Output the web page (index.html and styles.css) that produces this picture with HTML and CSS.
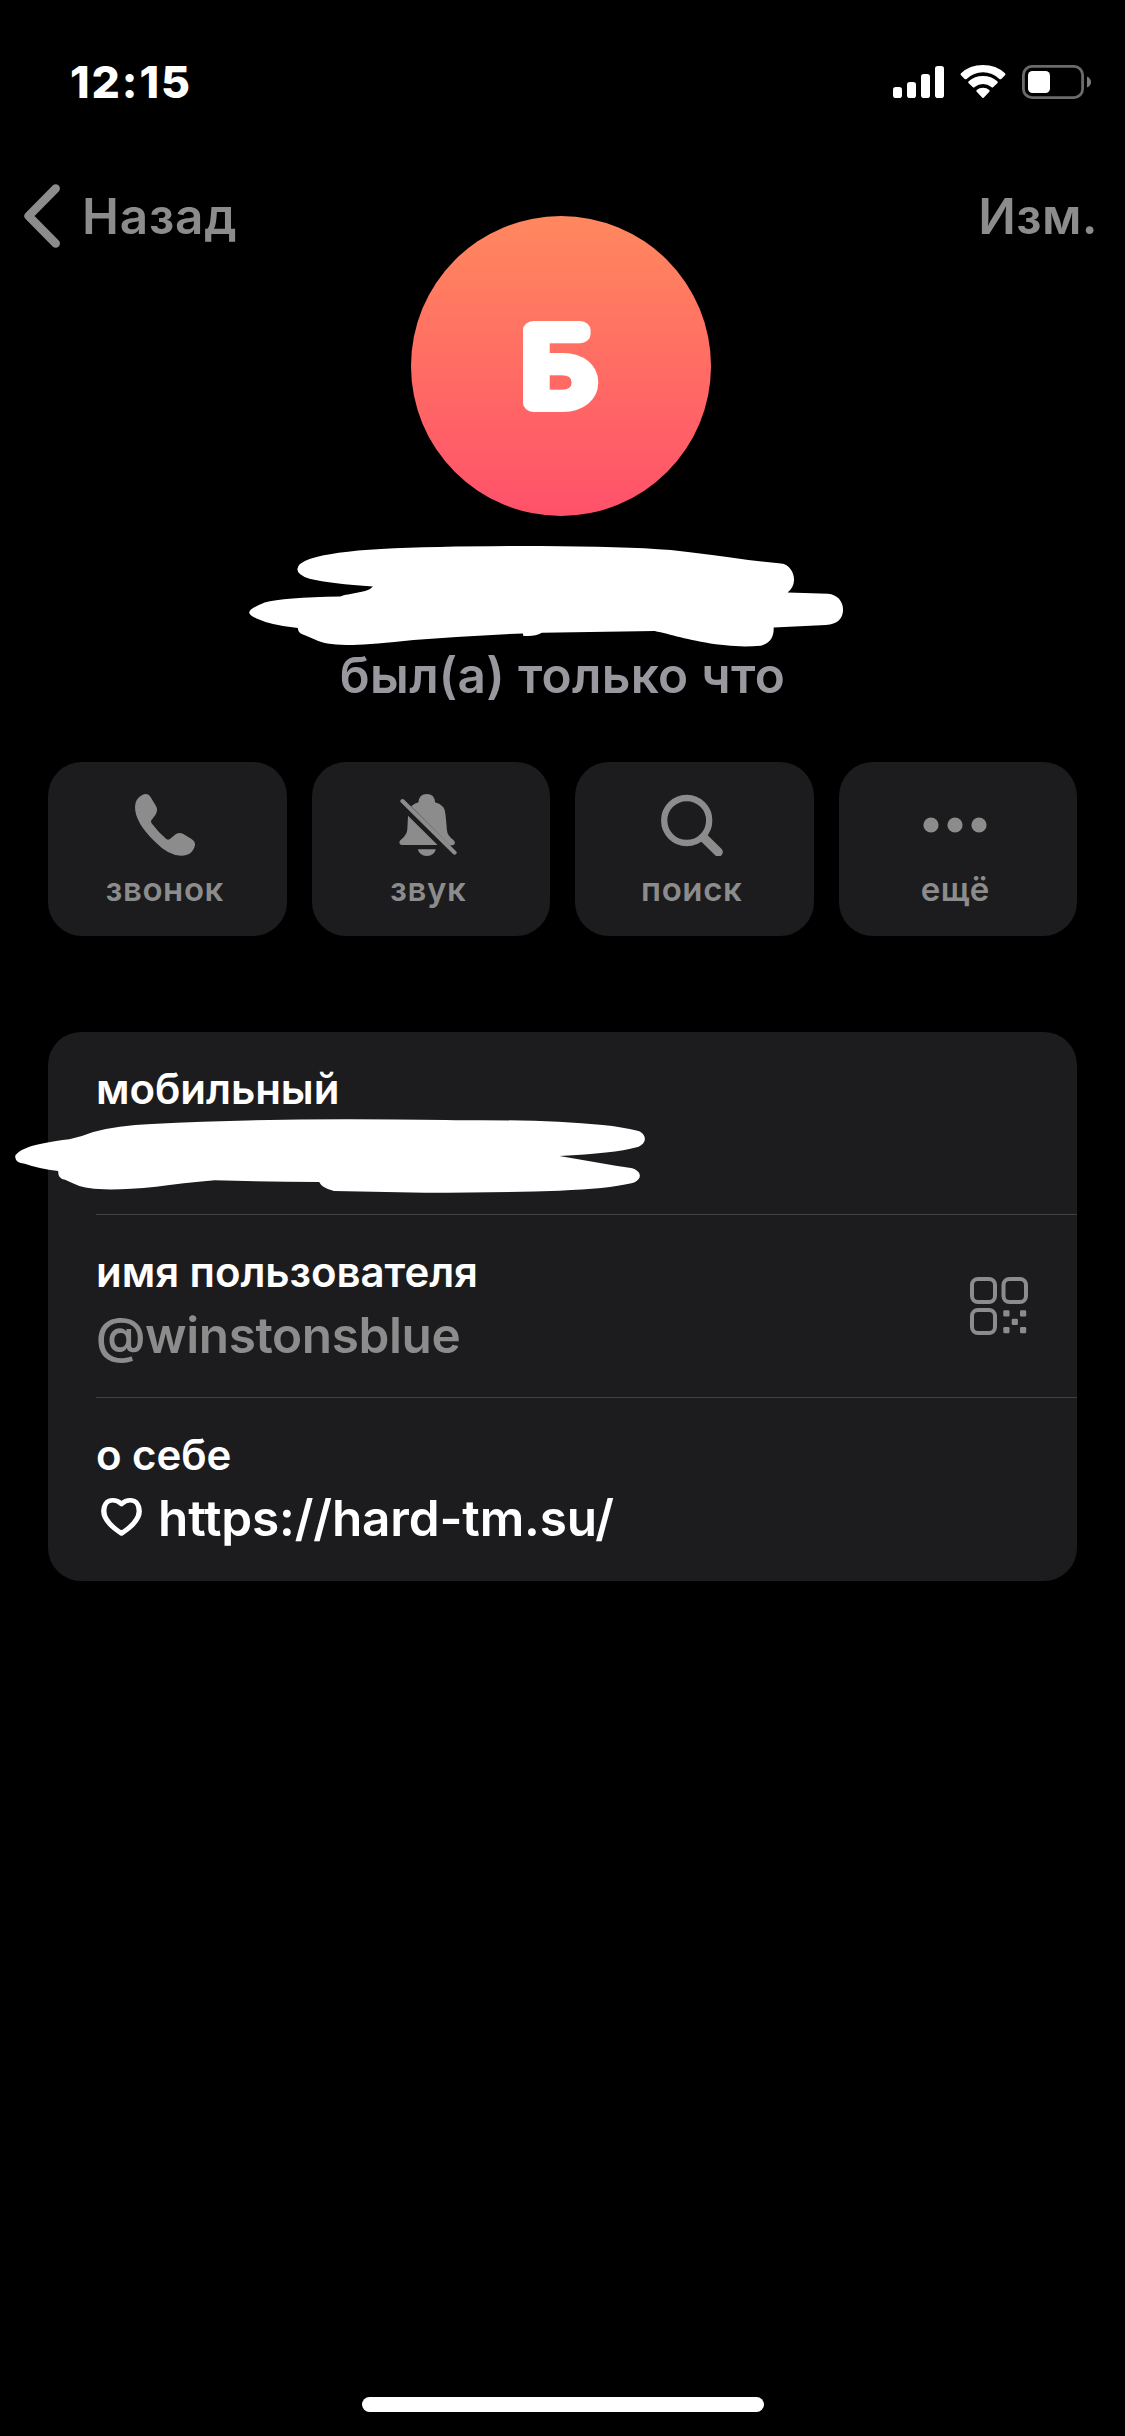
FILE: index.html
```html
<!DOCTYPE html>
<html lang="ru">
<head>
<meta charset="utf-8">
<title>Профиль</title>
<link rel="stylesheet" href="styles.css">
</head>
<body>
<header class="status-bar">
  <span class="time">12:15</span>
  <div class="status-icons">
    <svg width="51" height="34" viewBox="0 0 51 34" fill="#fff"><rect y="22" width="9" height="11" rx="2.8"/><rect x="14" y="17" width="9" height="16" rx="2.8"/><rect x="28" y="9" width="9" height="24" rx="2.8"/><rect x="42" y="1" width="9" height="32" rx="2.8"/></svg>
    <svg width="46" height="34" viewBox="301 75 136 102" fill="#fff"><path d="M369 75Q409 75 435 100Q438 103 435 106L424 117Q421 119 418 117Q397 97 369 97Q341 97 320 117Q317 119 314 117L303 106Q300 103 303 100Q329 75 369 75ZM369 108Q394 108 412 124Q415 127 412 130L400 141Q397 144 394 141Q383 132 369 132Q355 132 344 141Q341 144 338 141L326 130Q323 127 326 124Q344 108 369 108ZM369 143Q380 143 388 150Q390 152 388 155L371 173Q369 175 367 173L350 155Q348 152 350 150Q358 143 369 143Z"/></svg>
    <svg width="70" height="34" viewBox="0 0 70 34"><rect x="1.4" y="1.4" width="59.2" height="31.2" rx="8.5" fill="none" stroke="#6b6b6b" stroke-width="2.8"/><rect x="6" y="6" width="22" height="22" rx="4.5" fill="#fff"/><path d="M65 11.5Q69 13.5 69 17T65 22.5Z" fill="#7c7c7c"/></svg>
  </div>
</header>
<nav class="nav">
  <a class="back"><svg width="36" height="64" viewBox="0 0 36 64" fill="none" stroke="#8c8c8c" stroke-width="8.5" stroke-linecap="round" stroke-linejoin="round"><path d="M31.7 4.6L4.6 32L31.7 59.4"/></svg><span class="back-label">Назад</span></a>
  <a class="edit">Изм.</a>
</nav>
<main>
  <section class="profile">
    <svg class="avatar" viewBox="0 0 300 300"><defs><linearGradient id="warm" x2="0" y2="1"><stop stop-color="#ff885e"/><stop offset="1" stop-color="#ff516a"/></linearGradient></defs><circle cx="150" cy="150" r="150" fill="url(#warm)"/><text class="initial" transform="translate(147.5 187) scale(1.18 1)">Б</text></svg>
    <svg class="name-cover" viewBox="0 0 1568 400" preserveAspectRatio="none" fill="#fff"><path d="M350 200Q250 193 195 177Q165 165 165 148Q165 130 195 117Q250 95 370 87Q520 78 760 78Q960 79 1080 90Q1180 104 1270 120L1350 131C1370 133 1382 158 1382 180Q1381 205 1366 218L1465 222C1488 225 1502 244 1502 270C1502 296 1488 314 1460 316L1332 323C1333 350 1325 371 1300 378Q1250 384 1190 374C1120 361 1080 344 1040 334L764 339Q745 352 718 348V341Q580 349 450 361Q350 374 300 376Q240 376 215 363L185 347Q167 343 166 325Q100 316 65 296Q47 286 47 278Q48 266 85 248Q130 233 270 230C290 220 340 219 350 200Z"/></svg>
    <p class="presence">был(а) только что</p>
  </section>
  <section class="actions">
    <button class="action"><svg width="60" height="62" viewBox="305 134 174 182" preserveAspectRatio="none" fill="#8c8c8c"><path d="M336 134Q345 134 350 143L365 168Q373 181 365 194L352 212Q350 217 355 222Q374 248 395 265Q401 270 407 265L423 252Q434 246 444 251L470 267Q480 273 479 284Q477 298 465 308Q456 315 439 315Q402 315 363 274Q305 218 305 172Q306 147 326 137Q331 134 336 134Z"/></svg><span>звонок</span></button>
    <button class="action"><svg width="58" height="62" viewBox="1076 132 167 186" preserveAspectRatio="none" fill="#8c8c8c"><path d="M1111 169Q1121 160 1132 157Q1134 132 1156 132Q1178 132 1180 157Q1209 165 1210 194L1214 240Q1215 257 1232 269Q1241 278 1234 284Q1229 287 1222 286ZM1102 197L1187 285H1085Q1077 285 1077 276Q1078 271 1084 267Q1099 254 1100 238ZM1130 298H1182Q1178 317 1156 318Q1135 317 1130 298Z"/><path d="M1086 153L1236 308" stroke="#8c8c8c" stroke-width="12" stroke-linecap="round"/></svg><span>звук</span></button>
    <button class="action"><svg width="62" height="62" viewBox="661 794 62 62" fill="none" stroke="#8c8c8c" stroke-linecap="round"><circle cx="686.7" cy="820.5" r="22.5" stroke-width="6.3"/><path d="M703.5 837.5L718.3 852" stroke-width="9"/></svg><span>поиск</span></button>
    <button class="action"><svg width="64" height="62" viewBox="0 0 64 62" fill="#8c8c8c"><circle cx="8" cy="31" r="7.6"/><circle cx="32" cy="31" r="7.6"/><circle cx="56" cy="31" r="7.6"/></svg><span>ещё</span></button>
  </section>
  <section class="card">
    <div class="row">
      <div class="label mobile">мобильный</div>
      <svg class="phone-cover" viewBox="0 285 1568 245" preserveAspectRatio="none" fill="#fff"><path d="M35 411Q35 397 65 382Q95 368 160 358Q190 349 215 336Q270 316 350 312Q560 298 800 298Q960 298 1050 301Q1250 298 1390 315Q1435 321 1470 332C1492 340 1494 372 1468 382Q1415 401 1290 408L1420 437L1455 444C1481 452 1483 480 1456 490Q1400 507 1290 512Q1150 518 980 518L770 513Q742 504 736 486Q620 485 495 481Q420 490 360 500Q285 510 240 508Q190 506 168 490L150 479Q134 478 134 453Q90 446 57 431Q36 429 35 411Z"/></svg>
    </div>
    <div class="row">
      <div class="label username">имя пользователя</div>
      <div class="value handle">@winstonsblue</div>
      <svg class="qr" viewBox="0 0 58 58" fill="none" stroke="#8c8c8c" stroke-width="4"><rect x="2" y="2" width="23" height="23" rx="6"/><rect x="33.5" y="2" width="22.5" height="23" rx="6"/><rect x="2" y="33" width="23" height="23" rx="6"/><g fill="#8c8c8c" stroke="none"><rect x="33.3" y="33.3" width="6.2" height="6.2" rx="1.2"/><rect x="50" y="33.3" width="6.2" height="6.2" rx="1.2"/><rect x="41.7" y="41.7" width="6.2" height="6.2" rx="1.2"/><rect x="33.3" y="50" width="6.2" height="6.2" rx="1.2"/><rect x="50" y="50" width="6.2" height="6.2" rx="1.2"/></g></svg>
    </div>
    <div class="row">
      <div class="label about">о себе</div>
      <div class="value bio"><svg class="heart" viewBox="153 329 104 113" preserveAspectRatio="none" fill="none" stroke="#fff" stroke-width="13.5" stroke-linejoin="round"><path d="M205 347Q195 336 183 336C168 336 160 350 160 368C160 394 181 416 205 434C229 416 250 394 250 368C250 350 242 336 227 336Q215 336 205 347Z"/></svg><span>https://hard-tm.su/</span></div>
    </div>
  </section>
</main>
<div class="home-indicator"></div>
</body>
</html>
```
FILE: styles.css
```css
* { box-sizing: border-box; }
body {
  margin: 0;
  width: 1125px;
  height: 2436px;
  background: #000;
  color: #fff;
  font-family: Inter, "Liberation Sans", sans-serif;
  display: flex;
  flex-direction: column;
  overflow: hidden;
}
svg { display: block; flex: none; }
.status-bar {
  height: 168px;
  padding: 52px 33px 0 70px;
  display: flex;
  justify-content: space-between;
}
.time { font-size: 44.5px; line-height: 60px; font-weight: 800; letter-spacing: 1.9px; }
.status-icons { display: flex; gap: 16px; padding-top: 13px; }
.nav {
  height: 96px;
  padding: 0 27px 0 24px;
  display: flex;
  align-items: center;
  justify-content: space-between;
  font-size: 49.5px;
  line-height: 60px;
  font-weight: 560;
  color: #8c8c8c;
}
.back { display: flex; align-items: center; gap: 22px; }
.back-label { letter-spacing: .8px; }
.edit { letter-spacing: .4px; }
main { flex: 1; padding: 0 48px; }
.profile {
  margin-top: -48px;
  display: flex;
  flex-direction: column;
  align-items: center;
}
.avatar { width: 300px; height: 300px; margin-right: 3px; }
.initial {
  font-size: 100px;
  font-weight: 200;
  text-anchor: middle;
  fill: #fff;
  stroke: #fff;
  stroke-width: 18px;
  stroke-linejoin: round;
}
.name-cover { width: 640px; height: 133px; margin: 4px 25px 0 0; }
.presence {
  margin: -8px 0 0;
  font-size: 49.5px;
  line-height: 60px;
  font-weight: 580;
  letter-spacing: .3px;
  color: #98989e;
}
.actions {
  margin-top: 57px;
  display: grid;
  grid-template-columns: repeat(4, 1fr);
  gap: 25px;
}
.action {
  height: 174px;
  padding: 32px 5px 0 0;
  border: 0;
  border-radius: 34px;
  background: #1c1c1e;
  color: #8c8c8c;
  font: 600 33px/40px Inter, "Liberation Sans", sans-serif;
  letter-spacing: .6px;
  display: flex;
  flex-direction: column;
  align-items: center;
  gap: 13px;
}
.card { margin-top: 96px; border-radius: 33px; background: #1c1c1e; }
.row { position: relative; height: 183px; padding: 32px 0 0 48px; }
.row:not(:last-child)::after {
  content: "";
  position: absolute;
  left: 48px;
  right: 0;
  bottom: 0;
  height: 1px;
  background: #414144;
}
.label { font-size: 42px; line-height: 50px; font-weight: 580; letter-spacing: -.05px; }
.value { margin-top: 8px; font-size: 49.5px; line-height: 60px; font-weight: 580; }
.handle { color: #8c8c8c; letter-spacing: -.4px; }
.phone-cover { position: absolute; left: -48px; top: 83px; width: 680px; height: 81.7px; }
.qr { position: absolute; right: 49px; top: 62px; width: 58px; height: 58px; }
.bio { display: flex; letter-spacing: -.15px; }
.heart { width: 41px; height: 38px; margin: 10px 16px 0 5px; }
.home-indicator {
  width: 402px;
  height: 15px;
  margin: 0 0 24px 362px;
  border-radius: 8px;
  background: #fff;
}
```
